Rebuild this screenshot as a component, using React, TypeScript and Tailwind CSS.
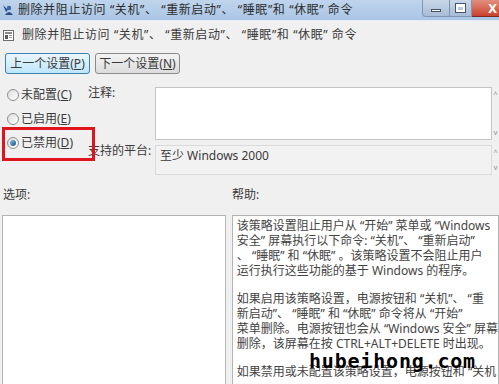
import React from "react";

function Radio({ checked }: { checked?: boolean }) {
  return (
    <div className="w-[12px] h-[12px] rounded-full border border-[#8e8f8f] bg-gradient-to-br from-[#dcdcdc] to-[#ffffff] flex items-center justify-center">
      {checked && (
        <div className="w-[6px] h-[6px] rounded-full bg-gradient-to-br from-[#7fc3ea] to-[#1c4f7c]" />
      )}
    </div>
  );
}

function Scroll() {
  return (
    <div className="w-[7px] flex flex-col justify-between items-center py-[4px] text-[#888] text-[7px] leading-none">
      <span>^</span>
      <span>v</span>
    </div>
  );
}

export default function App() {
  return (
    <div className="relative w-[499px] h-[384px] overflow-hidden bg-[#f0f0f0] text-[12px] text-[#3a3a3a] font-['Noto_Sans','Noto_Sans_CJK_SC',sans-serif]">
      {/* title bar */}
      <div className="h-[21px] flex items-center bg-gradient-to-b from-[#c0d5ed] to-[#a9c5e4] border-b border-[#e4edf7]">
        <svg width="14" height="14" viewBox="0 0 14 14" className="ml-[1px]">
          <path d="M2 2 L7 7 L5 9 Z" fill="#2a4e8a" />
          <circle cx="8" cy="5" r="2.2" fill="#3b67a8" />
          <path d="M4 12 Q8 6 12 12 Z" fill="#2a4e8a" />
        </svg>
        <span className="ml-[3px] whitespace-nowrap text-[#2c2c2c] tracking-[0.6px]">
          删除并阻止访问 “关机”、 “重新启动”、 “睡眠”和 “休眠” 命令
        </span>
        <div className="ml-auto self-start flex h-[17px]">
          <div className="w-[28px] border border-[#7f95b2] border-t-0 rounded-bl-[4px] bg-gradient-to-b from-[#c9d7e8] to-[#a8bdd6] flex items-center justify-center">
            <div className="w-[10px] h-[3px] bg-white border border-[#44546a] mt-[4px]" />
          </div>
          <div className="w-[22px] border-b border-r border-[#7f95b2] bg-gradient-to-b from-[#c9d7e8] to-[#a8bdd6] flex items-center justify-center">
            <div className="w-[9px] h-[8px] border-[2px] border-white border-t-[3px] outline outline-1 outline-[#44546a]" />
          </div>
          <div className="w-[27px] border-b border-[#7a2a20] bg-gradient-to-b from-[#e28e7e] to-[#c8402d] flex items-center justify-end pr-[2px] text-white font-bold text-[13px] leading-none">
            X
          </div>
        </div>
      </div>

      {/* header row */}
      <div className="h-[28px] flex items-center pl-[3px]">
        <svg width="11" height="11" viewBox="0 0 11 11">
          <rect x="0.5" y="0.5" width="10" height="10" fill="#ffffff" stroke="#6d6d6d" />
          <rect x="2" y="2" width="7" height="2" fill="#8a8a8a" />
          <rect x="2" y="5" width="3" height="4" fill="#5a5a5a" />
          <rect x="6" y="5" width="3" height="1" fill="#9a9a9a" />
          <rect x="6" y="7" width="3" height="1" fill="#9a9a9a" />
        </svg>
        <span className="ml-[8px] whitespace-nowrap tracking-[0.6px]">
          删除并阻止访问 “关机”、 “重新启动”、 “睡眠”和 “休眠” 命令
        </span>
      </div>

      {/* buttons */}
      <div className="flex gap-[5px] pl-[5px] mt-[4px]">
        <div className="w-[85px] h-[21px] rounded-[3px] border border-[#3c7fb1] bg-gradient-to-b from-[#eaf6fd] to-[#bee6fd] flex items-center justify-center whitespace-nowrap">
          上一个设置(<span className="underline">P</span>)
        </div>
        <div className="w-[85px] h-[21px] rounded-[3px] border border-[#8a8a8a] bg-gradient-to-b from-[#f4f4f4] to-[#dcdcdc] flex items-center justify-center whitespace-nowrap">
          下一个设置(<span className="underline">N</span>)
        </div>
      </div>

      {/* middle */}
      <div className="flex">
        <div className="w-[86px] pl-[7px] pt-[9px] flex flex-col">
          <div className="h-[24px] flex items-center gap-[2px]">
            <Radio />
            <span>未配置(<span className="underline">C</span>)</span>
          </div>
          <div className="h-[24px] flex items-center gap-[2px]">
            <Radio />
            <span>已启用(<span className="underline">E</span>)</span>
          </div>
          <div className="h-[24px] flex items-center gap-[2px]">
            <Radio checked />
            <span>已禁用(<span className="underline">D</span>)</span>
          </div>
        </div>
        <div className="flex-1 flex flex-col pt-[13px]">
          <div className="flex">
            <div className="w-[69px] -mt-[3px] pl-[2px]">注释:</div>
            <div className="flex-1 h-[53px] flex">
              <div className="flex-1 bg-white border border-[#c4c4c4]" />
              <Scroll />
            </div>
          </div>
          <div className="flex mt-[5px]">
            <div className="w-[69px] -mt-[3px] pl-[2px] whitespace-nowrap">支持的平台:</div>
            <div className="flex-1 h-[30px] flex">
              <div className="flex-1 bg-[#f2f2f2] border border-[#dadada] pl-[4px] pt-[1px]">
                至少 Windows 2000
              </div>
              <Scroll />
            </div>
          </div>
        </div>
      </div>

      {/* labels */}
      <div className="flex h-[40px] items-center">
        <div className="w-[232px] pl-[3px]">选项:</div>
        <div>帮助:</div>
      </div>

      {/* bottom boxes */}
      <div className="flex">
        <div className="ml-[2px] w-[224px] h-[180px] bg-white border border-[#b4b4b4]" />
        <div className="ml-[6px] flex-1 h-[180px] bg-white border border-[#b4b4b4] pl-[4px] pt-[2px] leading-[15px] whitespace-nowrap text-[#444]">
          <div>该策略设置阻止用户从 “开始” 菜单或 “Windows</div>
          <div>安全” 屏幕执行以下命令: “关机”、 “重新启动”</div>
          <div>、 “睡眠” 和 “休眠” 。该策略设置不会阻止用户</div>
          <div>运行执行这些功能的基于 Windows 的程序。</div>
          <div className="mt-[13px]">如果启用该策略设置，电源按钮和 “关机”、 “重</div>
          <div>新启动”、 “睡眠” 和 “休眠” 命令将从 “开始”</div>
          <div>菜单删除。电源按钮也会从 “Windows 安全” 屏幕</div>
          <div>删除，该屏幕在按 CTRL+ALT+DELETE 时出现。</div>
          <div className="mt-[13px]">如果禁用或未配置该策略设置，电源按钮和 “关机</div>
        </div>
      </div>

      {/* red annotation box */}
      <div className="absolute left-[2px] top-[127px] w-[93px] h-[34px] border-[3px] border-[#e0141c]" />

      {/* watermark */}
      <div className="absolute left-[309px] top-[351px] text-[20px] leading-none font-bold text-black tracking-[0.8px] font-['DejaVu_Sans_Mono',monospace]">
        hubeihong.com
      </div>
    </div>
  );
}
